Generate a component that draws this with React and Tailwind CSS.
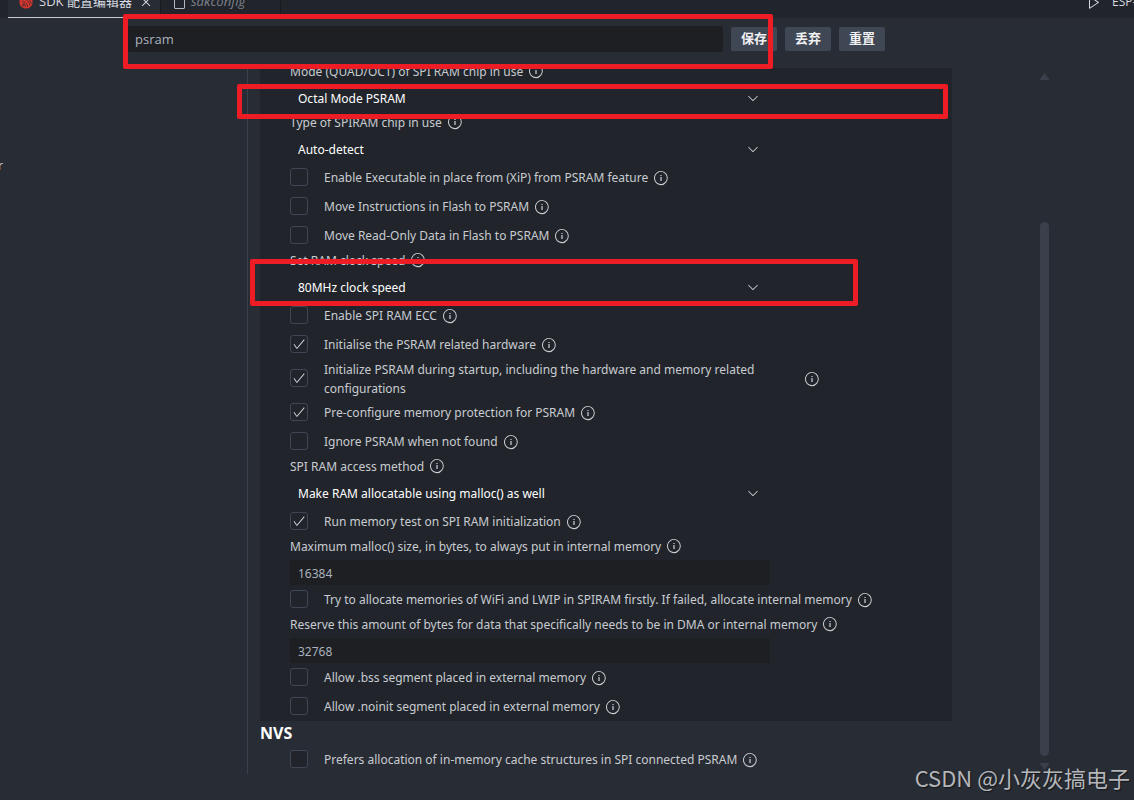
import React, { useState } from 'react';
import {
  VscCheck,
  VscChevronDown,
  VscClose,
  VscFile,
  VscInfo,
  VscPlay,
} from 'react-icons/vsc';

/**
 * SDK configuration editor
 * Search bar on top, filtered menuconfig options below
 */

const psramOptions = [
  { type: 'choice', id: 'mode', label: 'Mode (QUAD/OCT) of SPI RAM chip in use', value: 'Octal Mode PSRAM' },
  { type: 'choice', id: 'chip', label: 'Type of SPIRAM chip in use', value: 'Auto-detect' },
  { type: 'bool', id: 'xip', label: 'Enable Executable in place from (XiP) from PSRAM feature' },
  { type: 'bool', id: 'instr', label: 'Move Instructions in Flash to PSRAM' },
  { type: 'bool', id: 'rodata', label: 'Move Read-Only Data in Flash to PSRAM' },
  { type: 'choice', id: 'speed', label: 'Set RAM clock speed', value: '80MHz clock speed' },
  { type: 'bool', id: 'ecc', label: 'Enable SPI RAM ECC' },
  { type: 'bool', id: 'hw', label: 'Initialise the PSRAM related hardware', value: true },
  {
    type: 'bool',
    id: 'boot',
    label: 'Initialize PSRAM during startup, including the hardware and memory related configurations',
    value: true,
    wrap: true,
  },
  { type: 'bool', id: 'memprot', label: 'Pre-configure memory protection for PSRAM', value: true },
  { type: 'bool', id: 'ignore', label: 'Ignore PSRAM when not found' },
  { type: 'choice', id: 'access', label: 'SPI RAM access method', value: 'Make RAM allocatable using malloc() as well' },
  { type: 'bool', id: 'memtest', label: 'Run memory test on SPI RAM initialization', value: true },
  { type: 'int', id: 'malloc', label: 'Maximum malloc() size, in bytes, to always put in internal memory', value: '16384' },
  {
    type: 'bool',
    id: 'wifi',
    label: 'Try to allocate memories of WiFi and LWIP in SPIRAM firstly. If failed, allocate internal memory',
  },
  {
    type: 'int',
    id: 'reserve',
    label: 'Reserve this amount of bytes for data that specifically needs to be in DMA or internal memory',
    value: '32768',
  },
  { type: 'bool', id: 'bss', label: 'Allow .bss segment placed in external memory' },
  { type: 'bool', id: 'noinit', label: 'Allow .noinit segment placed in external memory' },
];

const nvsOptions = [
  { type: 'bool', id: 'nvs', label: 'Prefers allocation of in-memory cache structures in SPI connected PSRAM' },
];

function Info() {
  return <VscInfo className="size-4 shrink-0 text-[#c9ccd1]" />;
}

function BoolOption({ option }) {
  const [checked, setChecked] = useState(Boolean(option.value));
  return (
    <div className={`flex items-center gap-[5px] ${option.wrap ? 'h-[39px]' : 'h-[29px]'}`}>
      <label htmlFor={option.id} className="flex items-center gap-4">
        <span className="grid h-5 w-[18px] shrink-0 content-start justify-items-center">
          <input
            id={option.id}
            type="checkbox"
            checked={checked}
            onChange={(e) => setChecked(e.target.checked)}
            className="col-start-1 row-start-1 size-[18px] appearance-none rounded-[3px] border border-[#404754] bg-[#21252b]"
          />
          {checked && <VscCheck className="pointer-events-none col-start-1 row-start-1 size-3.5 self-center text-[#d7dae0]" />}
        </span>
        <span className={option.wrap ? 'w-[475px] leading-[19px]' : 'leading-[19px]'}>{option.label}</span>
      </label>
      <Info />
    </div>
  );
}

function OptionLabel({ option }) {
  return (
    <div className="flex h-5 items-center gap-[5px]">
      <label htmlFor={option.id} className="pt-0.5 leading-5">{option.label}</label>
      <Info />
    </div>
  );
}

function ChoiceOption({ option }) {
  return (
    <div>
      <OptionLabel option={option} />
      <div className="grid w-[480px] items-center pt-1">
        <select
          id={option.id}
          className="col-start-1 row-start-1 h-[27px] appearance-none bg-[#21252b] pl-2 text-white"
        >
          <option>{option.value}</option>
        </select>
        <VscChevronDown className="pointer-events-none col-start-1 row-start-1 mr-[9px] mb-0.5 size-4 justify-self-end" />
      </div>
    </div>
  );
}

function IntOption({ option }) {
  return (
    <div>
      <OptionLabel option={option} />
      <div className="pt-1">
        <input
          id={option.id}
          type="text"
          defaultValue={option.value}
          className="block h-[25px] w-[480px] rounded-xs bg-[#1d1f23] px-2 pt-0.5 text-[#abb2bf]"
        />
      </div>
    </div>
  );
}

function OptionList({ options }) {
  return options.map((option) => {
    if (option.type === 'bool') return <BoolOption key={option.id} option={option} />;
    if (option.type === 'choice') return <ChoiceOption key={option.id} option={option} />;
    return <IntOption key={option.id} option={option} />;
  });
}

function EspressifLogo() {
  return (
    <svg viewBox="0 0 16 16" className="size-3.5 shrink-0" fill="none" stroke="#282c34" strokeWidth="0.8">
      <circle cx="8" cy="8" r="7.500" fill="#d9362e" stroke="none" />
      <path d="M6 2.500c4.500.5 7.500 3.500 8 7.500M4.500 4.500c4.200 0 7.500 3 8 7.500M3.500 7c3.200.2 6 2.800 6.500 6.500M4 9.500c2 .2 3.500 1.800 3.800 3.800" />
      <circle cx="5" cy="12" r="1" />
    </svg>
  );
}

function TabBar() {
  return (
    <header className="flex h-[18px] items-end overflow-hidden bg-[#21252b] pl-2 font-['Open_Sans','Noto_Sans_CJK_SC',sans-serif] text-[13px]">
      <div className="flex h-8 w-[152px] items-center border-b border-[#c8cad0] bg-[#282c34] pl-[11px] text-[#d7dae0]">
        <EspressifLogo />
        <span className="ml-1.5 whitespace-nowrap">SDK 配置编辑器</span>
        <button type="button" aria-label="Close" className="ml-1.5">
          <VscClose className="size-4" />
        </button>
      </div>
      <div className="flex h-8 w-[121px] items-center gap-1 border-x border-[#181a1f] pl-2.5 text-[#7d828c]">
        <VscFile className="size-4 text-[#b4b8bf]" />
        <span className="italic">sdkconfig</span>
      </div>
      <button type="button" className="ml-auto flex h-8 w-[48px] items-center gap-2.5 whitespace-nowrap text-[12px] text-[#d7dae0]">
        <VscPlay className="size-4 shrink-0" />
        ESP-IDF
      </button>
    </header>
  );
}

function ScrollBar() {
  return (
    <div className="mr-[85px] flex w-[9px] flex-col items-center pt-[5px] pb-1" aria-hidden="true">
      <svg viewBox="0 0 9 7" className="h-[7px] w-[9px]" fill="#3a3f4b">
        <path d="M4.500 0 9 6v1H0V6z" />
      </svg>
      <div className="mt-[142px] mb-[7px] w-full flex-1 rounded-full bg-[#3a3f4b]" />
      <svg viewBox="0 0 9 7" className="h-[7px] w-[9px]" fill="#3a3f4b">
        <path d="M4.500 7 9 1V0H0v1z" />
      </svg>
    </div>
  );
}

export default function App() {
  const [query, setQuery] = useState('psram');

  return (
    <div className="relative min-h-screen overflow-hidden bg-[#282c34] font-['Noto_Sans','Noto_Sans_CJK_SC',sans-serif] text-[12px] text-[#c8cbd0]">
      <TabBar />

      <div className="flex h-[50px] items-start gap-2 pt-2 pl-[127px] font-['Open_Sans','Noto_Sans_CJK_SC',sans-serif] text-[13px]">
        <input
          type="text"
          aria-label="Search parameter"
          value={query}
          onChange={(e) => setQuery(e.target.value)}
          className="h-[26px] w-[596px] rounded-xs bg-[#1d1f23] px-2 text-[#abb2bf]"
        />
        <div className="flex gap-2 pt-px font-bold text-[#f0f1f3]">
          <button type="button" className="h-6 w-[46px] rounded-xs bg-[#404754]">保存</button>
          <button type="button" className="h-6 w-[46px] rounded-xs bg-[#404754]">丢弃</button>
          <button type="button" className="h-6 w-[46px] rounded-xs bg-[#404754]">重置</button>
        </div>
      </div>

      <div className="flex">
        <nav className="flex w-[248px] flex-col items-start border-r border-[#3b404b] pt-[88px]">
          <a href="#bootloader" className="-ml-0.5 leading-5">r</a>
        </nav>
        <main className="mr-[88px] min-w-0 flex-1 overflow-hidden pl-3">
          <section className="-mt-[7px] bg-[#21252b] pl-[30px]">
            <OptionList options={psramOptions} />
          </section>
          <section>
            <h2 className="h-6 text-[16px] leading-6 font-bold text-white">NVS</h2>
            <div className="pl-[30px]">
              <OptionList options={nvsOptions} />
            </div>
          </section>
        </main>
        <ScrollBar />
      </div>

      {/* highlight boxes drawn over the editor */}
      <div className="pointer-events-none absolute top-[14px] left-[123px] h-[55px] w-[650px] rounded-xs border-5 border-[#ee1c25]" />
      <div className="pointer-events-none absolute top-[84px] left-[237px] h-[35px] w-[711px] rounded-xs border-5 border-[#ee1c25]" />
      <div className="pointer-events-none absolute top-[259px] left-[250px] h-[47px] w-[608px] rounded-xs border-5 border-[#ee1c25]" />

      <p className="absolute right-1 bottom-[7px] font-['Noto_Sans_CJK_SC',sans-serif] text-[22px] leading-8 text-[#b4b6ba] [text-shadow:1px_1px_1px_#15171b]">
        CSDN @小灰灰搞电子
      </p>
    </div>
  );
}
